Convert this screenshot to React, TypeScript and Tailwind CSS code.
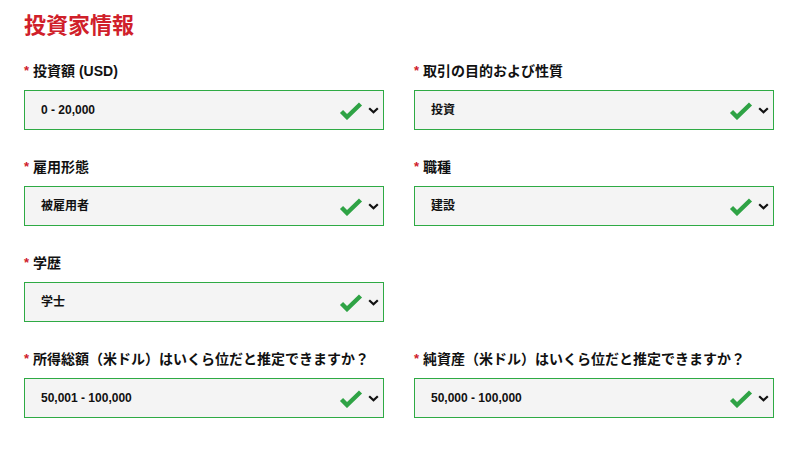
import React from "react";

interface Field {
  label: string;
  value: string;
}

const rows: (Field | null)[][] = [
  [
    { label: "投資額 (USD)", value: "0 - 20,000" },
    { label: "取引の目的および性質", value: "投資" },
  ],
  [
    { label: "雇用形態", value: "被雇用者" },
    { label: "職種", value: "建設" },
  ],
  [{ label: "学歴", value: "学士" }, null],
  [
    { label: "所得総額（米ドル）はいくら位だと推定できますか？", value: "50,001 - 100,000" },
    { label: "純資産（米ドル）はいくら位だと推定できますか？", value: "50,000 - 100,000" },
  ],
];

const font = {
  fontFamily: '"Liberation Sans", "Noto Sans CJK JP", sans-serif',
};

function CheckIcon() {
  return (
    <svg width="24" height="18" viewBox="0 0 24 18" className="shrink-0">
      <path
        d="M2.5 9.5 L8 15 L21.5 2"
        fill="none"
        stroke="#2fa345"
        strokeWidth="4.4"
        strokeLinecap="butt"
        strokeLinejoin="miter"
      />
    </svg>
  );
}

function Chevron() {
  return (
    <svg width="11" height="7" viewBox="0 0 11 7" className="shrink-0">
      <path d="M1.2 1.2 L5.5 5.3 L9.8 1.2" fill="none" stroke="#111" strokeWidth="2.2" />
    </svg>
  );
}

function SelectField({ field }: { field: Field }) {
  return (
    <div className="flex flex-col">
      <div className="flex h-5 items-center text-[14px] font-bold leading-5 text-[#111]">
        <span className="mr-[4px] text-[13px] text-[#d0202a]">*</span>
        <span>{field.label}</span>
      </div>
      <div className="mt-[9px] flex h-10 items-center border border-[#2eaa44] bg-[#f4f4f4] pl-4 pr-[4px]">
        <span className="flex-1 text-[12px] font-bold text-[#111]">{field.value}</span>
        <div className="mt-[2px] mr-[5px]">
          <CheckIcon />
        </div>
        <Chevron />
      </div>
    </div>
  );
}

export default function App() {
  return (
    <div className="min-h-[450px] w-[795px] bg-white px-6 pt-3" style={font}>
      <h1 className="text-[22px] font-bold leading-7 text-[#d0202a]">投資家情報</h1>
      <div className="mt-[21px] grid grid-cols-[360px_360px] gap-x-[30px] gap-y-[27px]">
        {rows.map((row, i) =>
          row.map((f, j) =>
            f ? <SelectField key={`${i}-${j}`} field={f} /> : <div key={`${i}-${j}`} />
          )
        )}
      </div>
    </div>
  );
}
